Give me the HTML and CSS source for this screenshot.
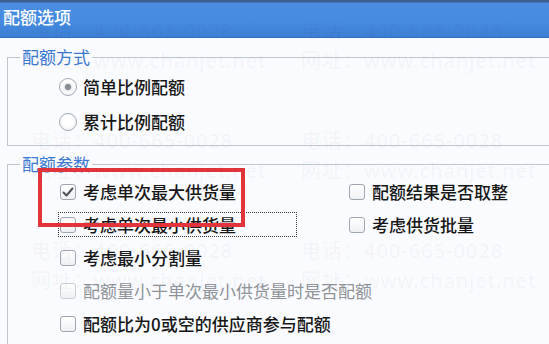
FILE: index.html
```html
<!DOCTYPE html>
<html lang="zh-CN">
  <head>
    <meta charset="UTF-8" />
    <meta name="viewport" content="width=device-width, initial-scale=1.0" />
    <title>配额选项</title>
    <link rel="stylesheet" href="styles.css">
  </head>
  <body>
    <div class="dialog">
      <div class="titlebar">配额选项</div>

      <fieldset class="group group-mode">
        <legend>配额方式</legend>
        <div class="options">
          <label class="option"><span class="radio checked"></span>简单比例配额</label>
          <label class="option"><span class="radio"></span>累计比例配额</label>
        </div>
      </fieldset>

      <fieldset class="group group-params">
        <legend>配额参数</legend>
        <div class="params">
          <label class="option">
            <span class="checkbox">
              <svg width="14" height="14" viewBox="0 0 14 14"><polyline points="2.5,7.5 5.5,10.5 11.5,3.5" /></svg>
            </span>考虑单次最大供货量
          </label>
          <label class="option"><span class="checkbox"></span>配额结果是否取整</label>
          <label class="option focused"><span class="checkbox"></span>考虑单次最小供货量</label>
          <label class="option"><span class="checkbox"></span>考虑供货批量</label>
          <label class="option wide"><span class="checkbox"></span>考虑最小分割量</label>
          <label class="option wide disabled"><span class="checkbox"></span>配额量小于单次最小供货量时是否配额</label>
          <label class="option wide"><span class="checkbox"></span>配额比为0或空的供应商参与配额</label>
        </div>
      </fieldset>

      <div class="highlight"></div>

      <div class="watermark">
        <div class="mark"><div>电话：400-665-0028</div><div>网址：www.chanjet.net</div></div>
        <div class="mark"><div>电话：400-665-0028</div><div>网址：www.chanjet.net</div></div>
        <div class="mark"><div>电话：400-665-0028</div><div>网址：www.chanjet.net</div></div>
        <div class="mark"><div>电话：400-665-0028</div><div>网址：www.chanjet.net</div></div>
        <div class="mark"><div>电话：400-665-0028</div><div>网址：www.chanjet.net</div></div>
        <div class="mark"><div>电话：400-665-0028</div><div>网址：www.chanjet.net</div></div>
      </div>
    </div>
  </body>
</html>
```

FILE: styles.css
```css
html,
body {
  margin: 0;
  height: 100%;
  overflow: hidden;
}

body {
  background: #f9fbfe;
  color: #161616;
  font-family: "Noto Sans CJK SC", "Noto Sans", sans-serif;
  font-size: 17px;
}

.dialog {
  position: relative;
  width: 549px;
  height: 344px;
  overflow: hidden;
}

.titlebar {
  height: 38px;
  box-sizing: border-box;
  padding: 5px 0 0 3px;
  color: #ffffff;
  font-size: 17px;
  font-weight: 500;
  line-height: 24px;
  background: linear-gradient(#3d5f90 0, #3d5f90 2px, #4a8de2 3px, #468be0 60%, #3c7ed4 100%);
  border-bottom: 1px solid #3470c0;
}

.group {
  margin: 0 -20px 0 7px;
  padding: 0 0 0 12px;
  border: 1px solid #bfc5cd;
  min-width: 0;
}

.group legend {
  padding: 0 2px;
  color: #3d78d2;
  font-size: 17px;
  line-height: 20px;
}

.group-mode {
  margin-top: 9px;
  padding-top: 2px;
  padding-bottom: 6px;
}

.group-params {
  margin-top: 8px;
  padding-top: 1px;
  padding-bottom: 20px;
}

.options {
  padding-left: 39px;
  display: flex;
  flex-direction: column;
}

.options .option {
  height: 35px;
  gap: 6px;
}

.params {
  padding-left: 40px;
  display: grid;
  grid-template-columns: 289px auto;
  grid-auto-rows: 33px;
}

.option {
  display: flex;
  align-items: center;
  gap: 7px;
  white-space: nowrap;
  line-height: 22px;
  font-weight: 500;
}

.option.wide {
  grid-column: 1 / -1;
}

.option.disabled {
  color: #909398;
  font-weight: 400;
}

.option.focused {
  align-self: center;
  box-sizing: border-box;
  width: 239px;
  height: 25px;
  margin-left: -2px;
  padding-left: 1px;
  border: 1px dotted #3a3a3a;
}

.radio {
  position: relative;
  width: 18px;
  height: 18px;
  box-sizing: border-box;
  border: 1px solid #a3abb5;
  border-radius: 50%;
  background: radial-gradient(circle at 50% 40%, #ffffff 40%, #e9ecf0 100%);
  flex: none;
}

.radio.checked::after {
  content: "";
  position: absolute;
  left: 5px;
  top: 5px;
  width: 6px;
  height: 6px;
  border-radius: 50%;
  background: #868b92;
  box-shadow: 0 0 2px 1px #d6dade;
}

.checkbox {
  display: flex;
  align-items: center;
  justify-content: center;
  width: 16px;
  height: 16px;
  box-sizing: border-box;
  border: 1px solid #9ea6b0;
  border-radius: 3px;
  background: linear-gradient(#ffffff, #eef0f3);
  flex: none;
}

.disabled .checkbox {
  border-color: #c9ced4;
}

.checkbox svg polyline {
  fill: none;
  stroke: #4d5156;
  stroke-width: 2;
  stroke-linecap: round;
  stroke-linejoin: round;
}

.highlight {
  position: absolute;
  left: 38px;
  top: 168px;
  width: 207px;
  height: 59px;
  box-sizing: border-box;
  border: 4px solid #e2343a;
}

.watermark {
  position: absolute;
  left: 31px;
  top: 16px;
  display: grid;
  grid-template-columns: 270px 270px;
  grid-auto-rows: 110px;
  color: rgba(30, 50, 80, 0.055);
  font-family: "Noto Sans", "Noto Sans CJK SC", sans-serif;
  font-size: 20px;
  line-height: 30px;
  letter-spacing: 1px;
  white-space: nowrap;
  pointer-events: none;
}
```
